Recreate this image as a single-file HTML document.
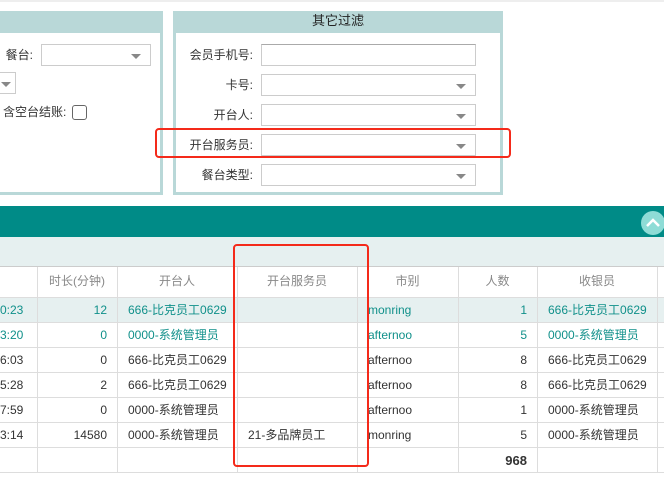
<html><head><style>
body{margin:0;width:664px;height:484px;overflow:hidden;background:#fff;font-family:"Liberation Sans","Noto Sans CJK SC",sans-serif;font-size:12px;color:#333;position:relative}
.a{position:absolute}
.panel{position:absolute;border:3px solid #b9d8d8;border-top:none;background:#fff;box-sizing:border-box}
.ph{position:absolute;left:0;right:0;top:0;height:22px;background:#b9d8d8;text-align:center;font-size:13px;line-height:20px;color:#222}
.inp{position:absolute;border:1px solid #ccc;height:22px;box-sizing:border-box;background:#fff}
.arr{position:absolute;right:9px;top:9px;width:0;height:0;border-left:5px solid transparent;border-right:5px solid transparent;border-top:5px solid #888}
.lbl{position:absolute;text-align:right;font-size:12px;line-height:22px}
.vl{position:absolute;top:267px;height:205px;width:1px;background:#ddd}
.hl{position:absolute;left:0;width:664px;height:1px;background:#ddd}
.c{position:absolute;font-size:12px;line-height:25px;white-space:nowrap}
.t{color:#10908a}
</style></head><body>
<div class="a" style="left:0;top:0;width:664px;height:2px;background:#eee"></div>
<div class="panel" style="left:-10px;top:11px;width:173px;height:184px"><div class="ph"></div></div>
<div class="panel" style="left:173px;top:11px;width:330px;height:184px"><div class="ph">其它过滤</div></div>
<div class="lbl" style="left:0;width:33px;top:44px">餐台:</div>
<div class="inp" style="left:41px;top:44px;width:110px"><div class="arr"></div></div>
<div class="inp" style="left:-10px;top:72px;width:26px"><div class="arr" style="right:4px"></div></div>
<div class="lbl" style="left:3px;top:101px">含空台结账:</div>
<div class="a" style="left:72px;top:105px;width:13px;height:13px;border:1px solid #666;border-radius:3px"></div>
<div class="lbl" style="left:173px;width:80px;top:44px">会员手机号:</div>
<div class="inp" style="left:261px;top:44px;width:215px;border-top-color:#aaa"></div>
<div class="lbl" style="left:173px;width:80px;top:74px">卡号:</div>
<div class="inp" style="left:261px;top:74px;width:215px"><div class="arr"></div></div>
<div class="lbl" style="left:173px;width:80px;top:104px">开台人:</div>
<div class="inp" style="left:261px;top:104px;width:215px"><div class="arr"></div></div>
<div class="lbl" style="left:173px;width:80px;top:134px">开台服务员:</div>
<div class="inp" style="left:261px;top:134px;width:215px"><div class="arr"></div></div>
<div class="lbl" style="left:173px;width:80px;top:164px">餐台类型:</div>
<div class="inp" style="left:261px;top:164px;width:215px"><div class="arr"></div></div>
<div class="a" style="left:0;top:206px;width:664px;height:31px;background:#008b87"></div>
<div class="a" style="left:641px;top:211px;width:24px;height:24px;border-radius:12px;background:#8edcd6"></div>
<svg class="a" style="left:644px;top:214px" width="18" height="18"><path d="M3 12 L9 6 L15 12" stroke="#fff" stroke-width="2.5" fill="none"/></svg>
<div class="a" style="left:0;top:237px;width:664px;height:30px;background:#e6f0f0"></div>
<div class="hl" style="top:266px;background:#ccc"></div>
<div class="a" style="left:0;top:297px;width:664px;height:25px;background:#e6f0f0"></div>
<div class="hl" style="top:297px"></div><div class="hl" style="top:322px"></div><div class="hl" style="top:347px"></div><div class="hl" style="top:372px"></div><div class="hl" style="top:397px"></div><div class="hl" style="top:422px"></div><div class="hl" style="top:447px"></div><div class="hl" style="top:472px"></div>
<div class="vl" style="left:37px"></div><div class="vl" style="left:117px"></div><div class="vl" style="left:237px"></div><div class="vl" style="left:357px"></div><div class="vl" style="left:458px"></div><div class="vl" style="left:537px"></div><div class="vl" style="left:657px"></div>
<div class="c" style="top:269px;left:37px;width:80px;text-align:center;color:#888">时长(分钟)</div>
<div class="c" style="top:269px;left:117px;width:120px;text-align:center;color:#888">开台人</div>
<div class="c" style="top:269px;left:237px;width:120px;text-align:center;color:#888">开台服务员</div>
<div class="c" style="top:269px;left:357px;width:101px;text-align:center;color:#888">市别</div>
<div class="c" style="top:269px;left:458px;width:79px;text-align:center;color:#888">人数</div>
<div class="c" style="top:269px;left:537px;width:120px;text-align:center;color:#888">收银员</div>
<div class="c t" style="top:298px;left:0">0:23</div><div class="c t" style="top:298px;right:557px">12</div><div class="c t" style="top:298px;left:128px">666-比克员工0629</div><div class="c t" style="top:298px;left:368px">monring</div><div class="c t" style="top:298px;right:137px">1</div><div class="c t" style="top:298px;left:548px">666-比克员工0629</div>
<div class="c t" style="top:323px;left:0">3:20</div><div class="c t" style="top:323px;right:557px">0</div><div class="c t" style="top:323px;left:128px">0000-系统管理员</div><div class="c t" style="top:323px;left:368px">afternoo</div><div class="c t" style="top:323px;right:137px">5</div><div class="c t" style="top:323px;left:548px">0000-系统管理员</div>
<div class="c" style="top:348px;left:0">6:03</div><div class="c" style="top:348px;right:557px">0</div><div class="c" style="top:348px;left:128px">666-比克员工0629</div><div class="c" style="top:348px;left:368px">afternoo</div><div class="c" style="top:348px;right:137px">8</div><div class="c" style="top:348px;left:548px">666-比克员工0629</div>
<div class="c" style="top:373px;left:0">5:28</div><div class="c" style="top:373px;right:557px">2</div><div class="c" style="top:373px;left:128px">666-比克员工0629</div><div class="c" style="top:373px;left:368px">afternoo</div><div class="c" style="top:373px;right:137px">8</div><div class="c" style="top:373px;left:548px">666-比克员工0629</div>
<div class="c" style="top:398px;left:0">7:59</div><div class="c" style="top:398px;right:557px">0</div><div class="c" style="top:398px;left:128px">0000-系统管理员</div><div class="c" style="top:398px;left:368px">afternoo</div><div class="c" style="top:398px;right:137px">1</div><div class="c" style="top:398px;left:548px">0000-系统管理员</div>
<div class="c" style="top:423px;left:0">3:14</div><div class="c" style="top:423px;right:557px">14580</div><div class="c" style="top:423px;left:128px">0000-系统管理员</div><div class="c" style="top:423px;left:248px">21-多品牌员工</div><div class="c" style="top:423px;left:368px">monring</div><div class="c" style="top:423px;right:137px">5</div><div class="c" style="top:423px;left:548px">0000-系统管理员</div>
<div class="c" style="top:448px;right:137px;font-weight:bold;font-size:13px">968</div>
<div class="a" style="left:155px;top:128px;width:352px;height:26px;border:2px solid #f42a1a;border-radius:4px"></div>
<div class="a" style="left:233px;top:244px;width:132px;height:219px;border:2px solid #f42a1a;border-radius:4px"></div>
</body></html>
